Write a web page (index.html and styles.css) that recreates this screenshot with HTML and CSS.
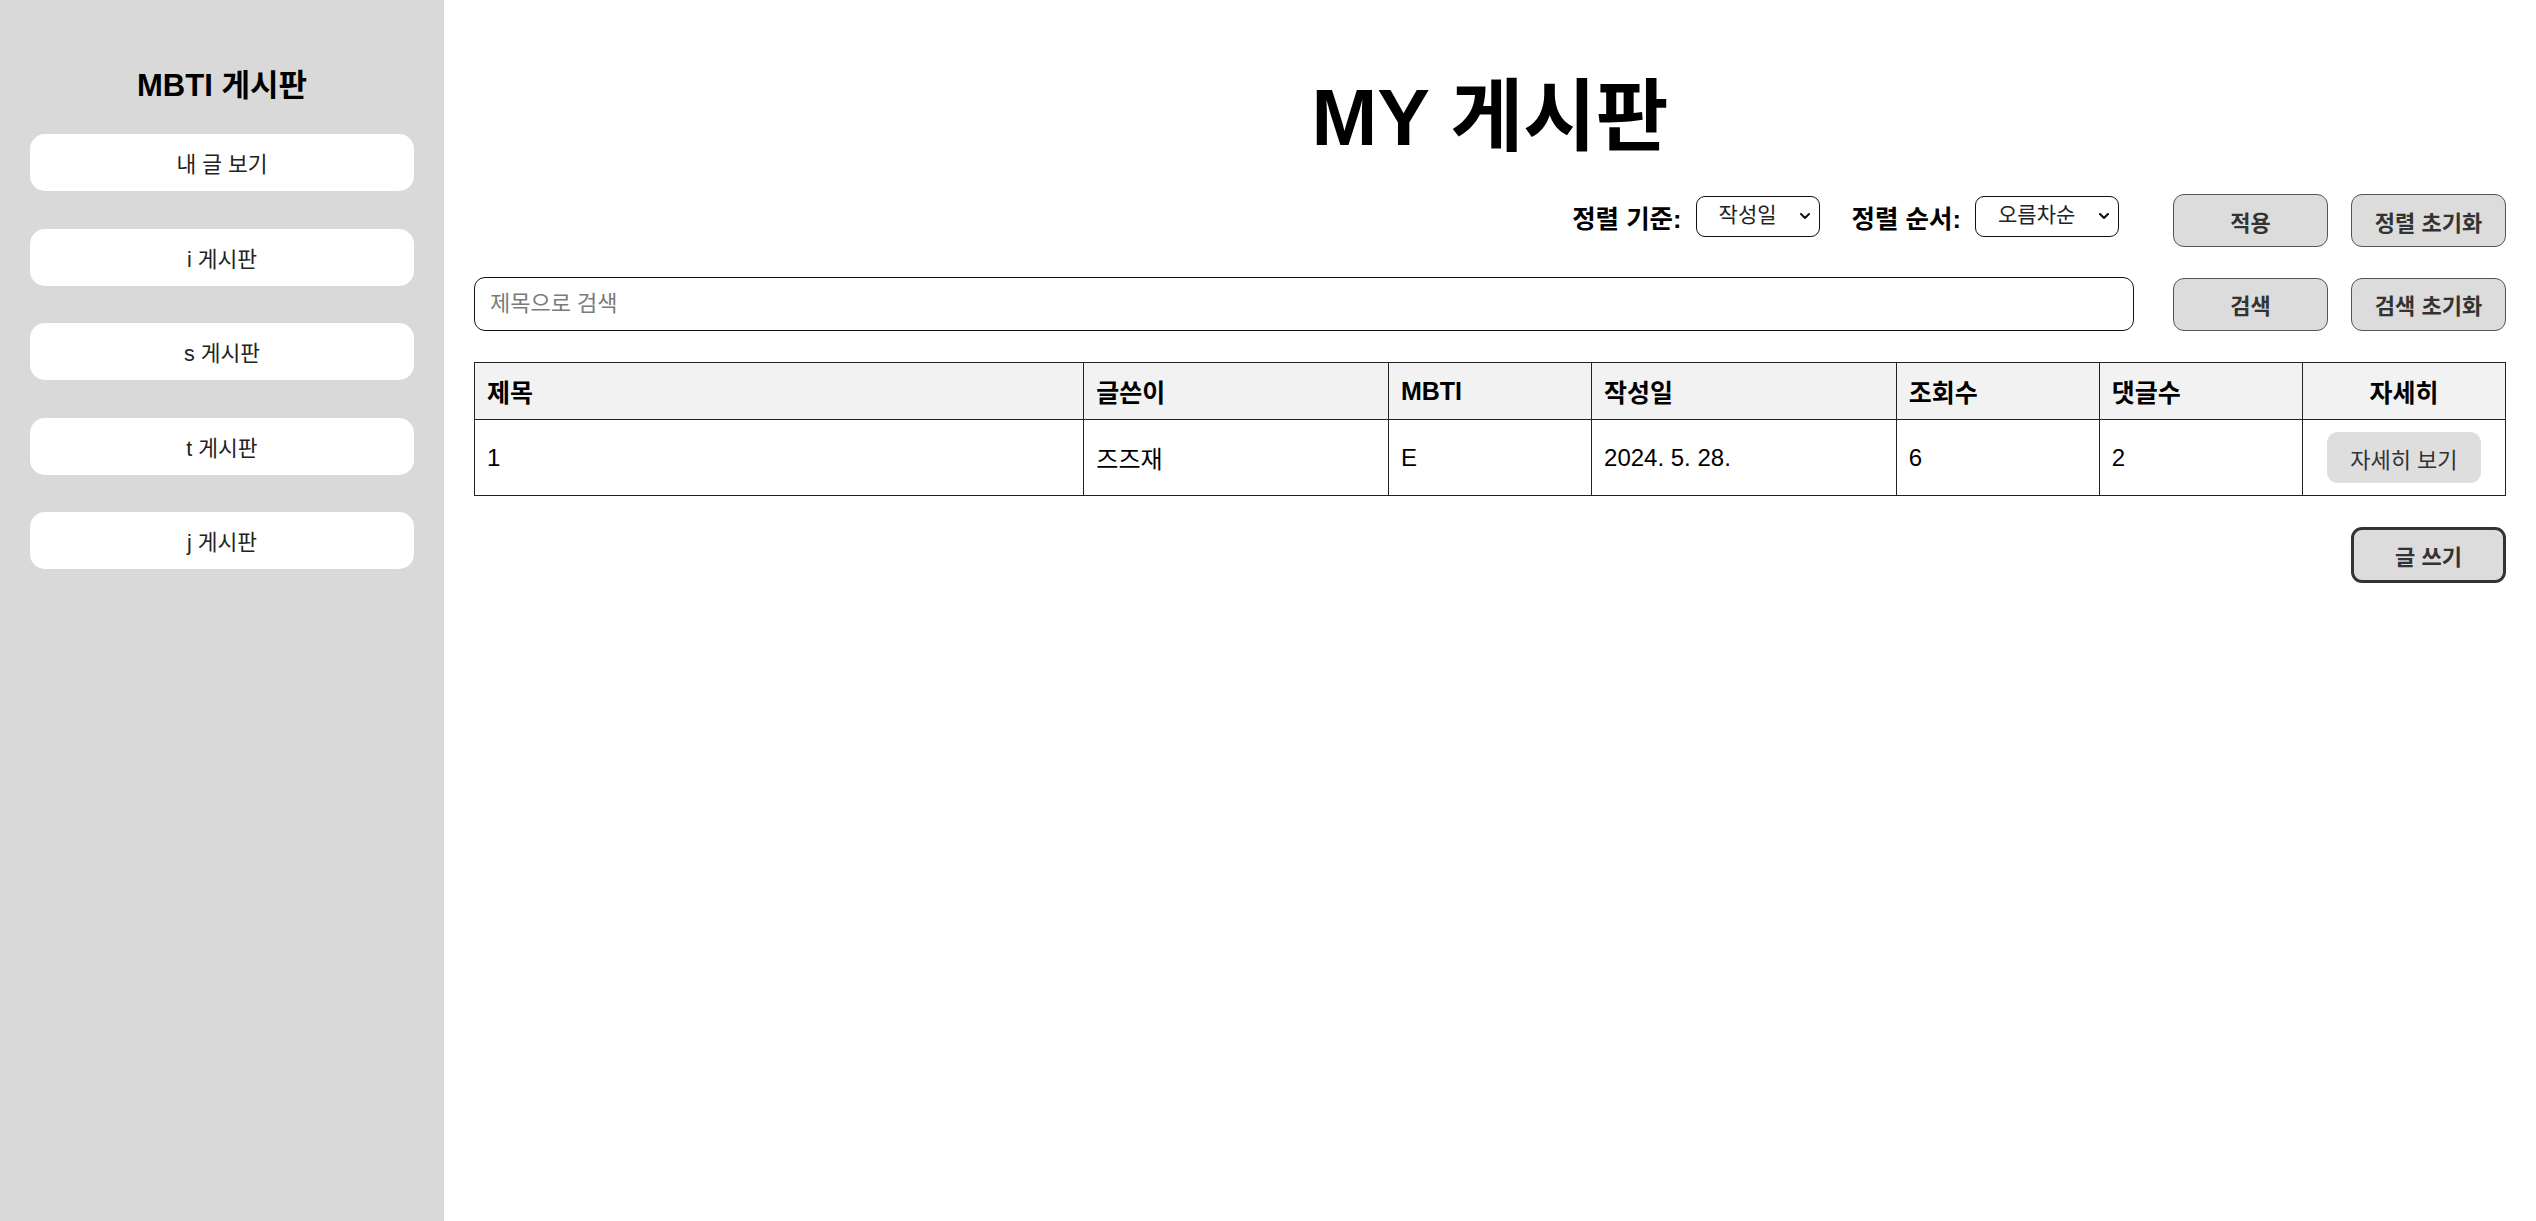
FILE: index.html
```html
<!DOCTYPE html>
<html lang="ko">
<head>
<meta charset="utf-8">
<title>MY 게시판</title>
<link rel="stylesheet" href="styles.css">
</head>
<body>
<div class="layout">
  <aside class="sidebar">
    <h2 class="side-title">MBTI 게시판</h2>
    <nav class="side-nav">
      <button class="side-btn">내 글 보기</button>
      <button class="side-btn">i 게시판</button>
      <button class="side-btn">s 게시판</button>
      <button class="side-btn">t 게시판</button>
      <button class="side-btn">j 게시판</button>
    </nav>
  </aside>
  <main class="main">
    <h1 class="page-title">MY 게시판</h1>
    <div class="row sort-row">
      <div class="sort-controls">
        <label class="sort-label">정렬 기준:</label>
        <span class="select-wrap select-by">
          <select class="select"><option>작성일</option><option>조회수</option></select>
          <svg class="chev" viewBox="0 0 10 7" width="10" height="7"><polyline points="1,1 5,5 9,1" fill="none" stroke="#111" stroke-width="2" stroke-linecap="round" stroke-linejoin="round"/></svg>
        </span>
        <label class="sort-label label-gap">정렬 순서:</label>
        <span class="select-wrap select-order">
          <select class="select"><option>오름차순</option><option>내림차순</option></select>
          <svg class="chev" viewBox="0 0 10 7" width="10" height="7"><polyline points="1,1 5,5 9,1" fill="none" stroke="#111" stroke-width="2" stroke-linecap="round" stroke-linejoin="round"/></svg>
        </span>
      </div>
      <div class="btn-group">
        <button class="btn">적용</button>
        <button class="btn">정렬 초기화</button>
      </div>
    </div>
    <div class="row search-row">
      <input class="search-input" type="text" placeholder="제목으로 검색">
      <div class="btn-group">
        <button class="btn">검색</button>
        <button class="btn">검색 초기화</button>
      </div>
    </div>
    <table class="board">
      <colgroup>
        <col class="c30"><col class="c15"><col class="c10"><col class="c15"><col class="c10"><col class="c10"><col class="c10">
      </colgroup>
      <thead>
        <tr>
          <th>제목</th><th>글쓴이</th><th>MBTI</th><th>작성일</th><th>조회수</th><th>댓글수</th><th class="center">자세히</th>
        </tr>
      </thead>
      <tbody>
        <tr>
          <td>1</td><td>즈즈재</td><td>E</td><td>2024. 5. 28.</td><td>6</td><td>2</td>
          <td class="center"><button class="detail-btn">자세히 보기</button></td>
        </tr>
      </tbody>
    </table>
    <div class="write-row">
      <button class="write-btn">글 쓰기</button>
    </div>
  </main>
</div>
</body>
</html>
```
FILE: styles.css
```css
* { box-sizing: border-box; }
html, body { margin: 0; padding: 0; }
body {
  font-family: "Liberation Sans", "Noto Sans CJK KR", sans-serif;
  color: #000;
  background: #fff;
}
button, input, select {
  font-family: "Liberation Sans", "Noto Sans CJK KR", sans-serif;
}
.layout {
  display: flex;
  min-height: 1221px;
}
.sidebar {
  width: 444px;
  flex: 0 0 444px;
  background: #d9d9d9;
  padding: 68px 30px 0;
}
.side-title {
  margin: 0;
  font-size: 31px;
  line-height: 36px;
  font-weight: bold;
  text-align: center;
}
.side-nav {
  margin-top: 30px;
  display: flex;
  flex-direction: column;
  gap: 37.5px;
}
.side-btn {
  height: 57px;
  width: 100%;
  border: none;
  border-radius: 15px;
  background: #fff;
  font-size: 21.5px;
  color: #222;
  cursor: pointer;
}
.main {
  flex: 1;
  padding: 72px 30px 0;
  display: flex;
  flex-direction: column;
}
.page-title {
  margin: 0;
  font-size: 79px;
  line-height: 92px;
  font-weight: bold;
  text-align: center;
}
.row {
  display: flex;
  align-items: center;
  gap: 39px;
}
.sort-row {
  margin-top: 30px;
  justify-content: flex-end;
}
.sort-controls {
  display: flex;
  align-items: center;
  margin-right: 15px;
  margin-bottom: 8px;
}
.sort-label {
  font-size: 25.5px;
  font-weight: bold;
  margin-right: 14px;
}
.label-gap { margin-left: 32px; }
.select-wrap {
  position: relative;
  display: inline-block;
}
.select-by { width: 124px; }
.select-order { width: 144px; }
.select {
  appearance: none;
  -webkit-appearance: none;
  width: 100%;
  height: 41px;
  border: 1px solid #111;
  border-radius: 9px;
  background: #fff;
  padding: 0 0 4px 22px;
  font-size: 21px;
  color: #222;
}
.chev {
  position: absolute;
  right: 10px;
  top: 17px;
}
.btn-group {
  display: flex;
  gap: 23px;
}
.btn {
  width: 155px;
  height: 53px;
  border: 1px solid #555;
  border-radius: 11px;
  background: #dcdcdc;
  color: #333;
  font-size: 22px;
  font-weight: bold;
  cursor: pointer;
}
.search-row {
  margin-top: 30px;
}
.search-input {
  flex: 1;
  height: 54px;
  border: 1.5px solid #111;
  border-radius: 11px;
  padding: 0 15px;
  font-size: 22px;
  outline: none;
}
.search-input::placeholder { color: #7a7a7a; }
.board {
  margin-top: 31px;
  width: 100%;
  border-collapse: collapse;
  table-layout: fixed;
}
.c30 { width: 30%; }
.c15 { width: 15%; }
.c10 { width: 10%; }
.board th, .board td {
  border: 1px solid #222;
  text-align: left;
  padding: 0 12px;
}
.board th {
  background: #f2f2f2;
  height: 57px;
  font-size: 25px;
  font-weight: bold;
}
.board td {
  height: 76px;
  font-size: 24px;
}
.board .center { text-align: center; }
.detail-btn {
  width: 154px;
  height: 51px;
  border: none;
  border-radius: 11px;
  background: #dedede;
  color: #333;
  font-size: 22px;
  vertical-align: middle;
}
.write-row {
  margin-top: 31px;
  display: flex;
  justify-content: flex-end;
}
.write-btn {
  width: 155px;
  height: 56px;
  border: 3px solid #333;
  border-radius: 11px;
  background: #dcdcdc;
  color: #333;
  font-size: 22px;
  font-weight: bold;
}
```
